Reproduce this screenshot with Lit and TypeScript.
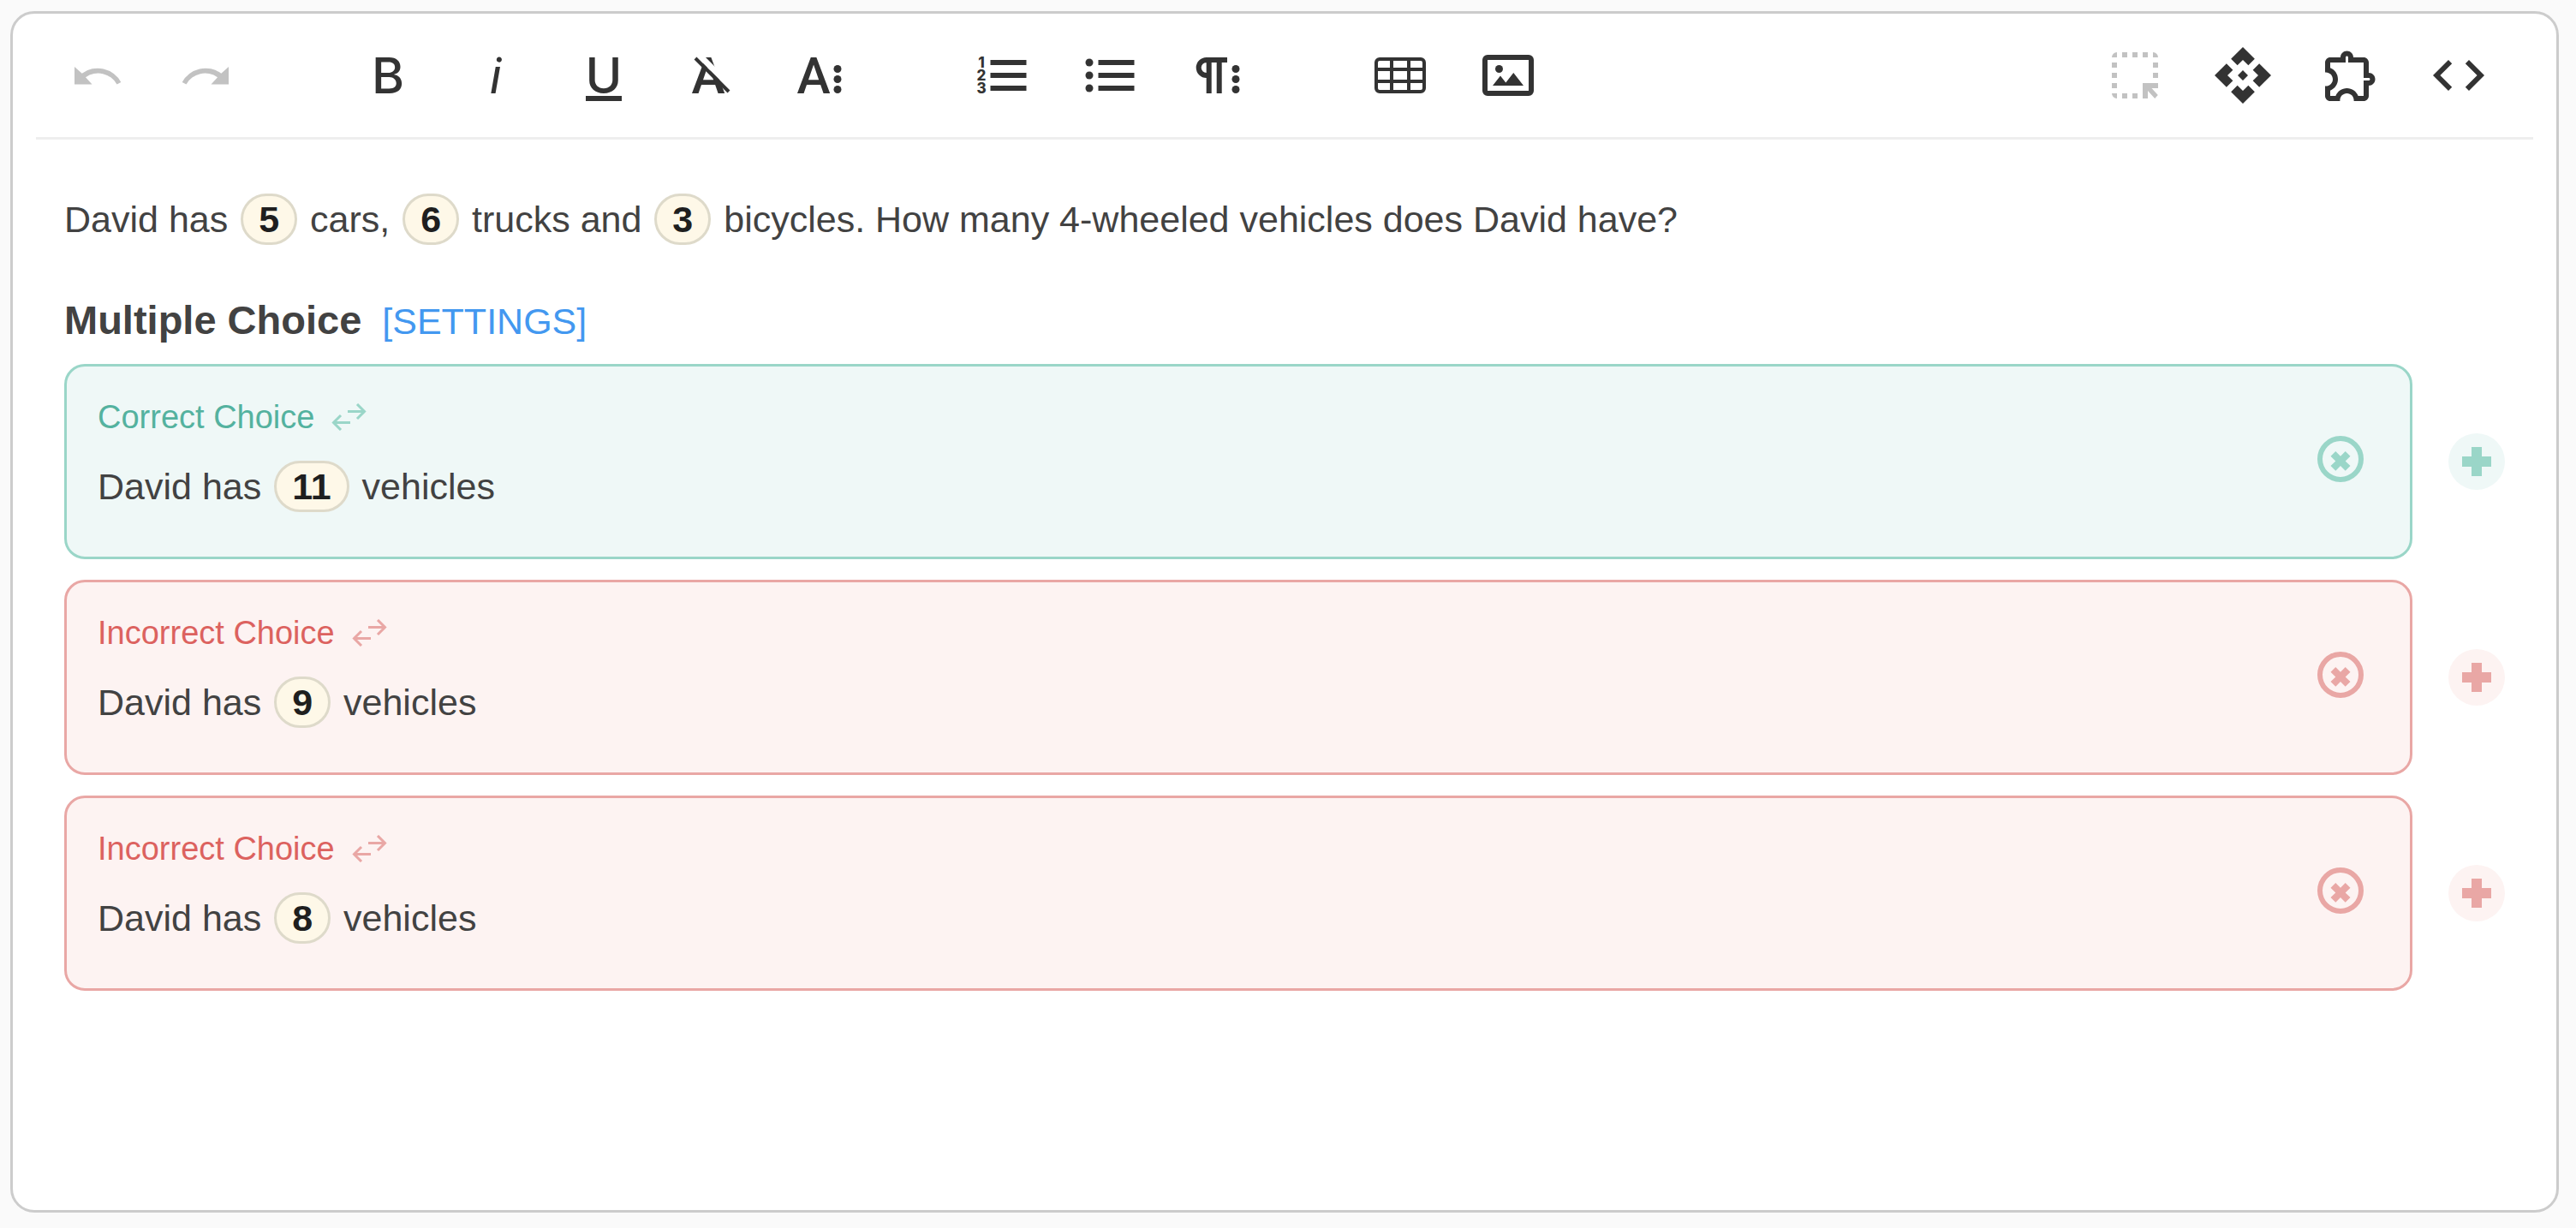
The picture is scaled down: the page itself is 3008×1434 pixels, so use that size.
import { LitElement, html, svg, css, type SVGTemplateResult } from "lit";
import { customElement, property } from "lit/decorators.js";
import { classMap } from "lit/directives/class-map.js";

// Toolbar icons are drawn on a 72 x 72 grid; those from a 24-unit set are scaled by 3.
const icons: Record<string, SVGTemplateResult> = {
  undo: svg`<path d="M9 26l8.7 7.7A31 31 0 0 1 63.3 44l-4.8 2.4A25 25 0 0 0 22 38.3l7.5 8.2H9z"/>`,
  redo: svg`<path transform="translate(72 0) scale(-1 1)" d="M9 26l8.7 7.7A31 31 0 0 1 63.3 44l-4.8 2.4A25 25 0 0 0 22 38.3l7.5 8.2H9z"/>`,
  bold: svg`<text class="glyph wide" x="36" y="57">B</text>`,
  italic: svg`<text class="glyph slanted" x="36" y="57">i</text>`,
  underline: svg`<text class="glyph wide" x="36" y="57">U</text><path d="M15 60h42v6H15z"/>`,
  clear: svg`<text class="glyph" x="32" y="57">A</text>
    <path class="gap" d="M21 12 L61 52"/>
    <path class="slash" d="M17 16 L56 55"/>`,
  moreText: svg`<text class="glyph" x="29" y="57">A</text>
    <circle cx="57" cy="28.5" r="4.5"/><circle cx="57" cy="40.5" r="4.5"/><circle cx="57" cy="52.5" r="4.5"/>`,
  ordered: svg`<text class="digit" x="12" y="27">1</text><text class="digit" x="12" y="42">2</text><text class="digit" x="12" y="57">3</text>
    <path d="M22.5 18h42v6h-42zM22.5 33h42v6h-42zM22.5 48h42v6h-42z"/>`,
  bullets: svg`<circle cx="12" cy="21" r="4.5"/><circle cx="12" cy="36" r="4.5"/><circle cx="12" cy="51" r="4.5"/>
    <path d="M22.5 18h42v6h-42zM22.5 33h42v6h-42zM22.5 48h42v6h-42z"/>`,
  paragraph: svg`<path class="line6" d="M47 18H22.7a9 9 0 0 0 0 18h3M25.7 18v39M37.7 18v39"/>
    <circle cx="57" cy="28.5" r="4.5"/><circle cx="57" cy="40.5" r="4.5"/><circle cx="57" cy="52.5" r="4.5"/>`,
  table: svg`<rect class="line4" x="8" y="17" width="56" height="38" rx="4"/>
    <path class="line4" d="M26 17v38M46 17v38M8 29h56M8 43h56"/>`,
  image: svg`<path fill-rule="evenodd" d="M12 12h48a6 6 0 0 1 6 6v36a6 6 0 0 1-6 6H12a6 6 0 0 1-6-6V18a6 6 0 0 1 6-6zM12 18v36h48V18z"/>
    <circle cx="25.5" cy="28.5" r="4.5"/><path d="M18 48l9-11.5 6.3 8L42.3 33 54 48z"/>`,
  select: svg`<path d="M9 15a6 6 0 0 1 6-6v6zM21 9h6v6h-6zM33 9h6v6h-6zM45 9h6v6h-6zM57 9a6 6 0 0 1 6 6h-6zM9 21h6v6H9zM9 33h6v6H9zM9 45h6v6H9zM9 57h6v6a6 6 0 0 1-6-6zM21 57h6v6h-6zM33 57h6v6h-6zM57 21h6v6h-6zM57 33h6v6h-6zM45 45h18v6h-7.5l7.3 8-3.6 4L51 54v9h-6z"/>`,
  api: svg`<path transform="scale(3)" d="M14 12l-2 2-2-2 2-2 2 2zm-2-6l2.12 2.12 2.5-2.5L12 1 7.38 5.62l2.5 2.5L12 6zm-6 6l2.12-2.12-2.5-2.5L1 12l4.62 4.62 2.5-2.5L6 12zm12 0l-2.12 2.12 2.5 2.5L23 12l-4.62-4.62-2.5 2.5L18 12zm-6 6l-2.12-2.12-2.5 2.5L12 23l4.62-4.62-2.5-2.5L12 18z"/>`,
  plugin: svg`<path transform="scale(3)" d="M10.5 4.5c.28 0 .5.22.5.5v2h6v6h2c.28 0 .5.22.5.5s-.22.5-.5.5h-2v6h-2.12c-.68-1.75-2.39-3-4.38-3s-3.7 1.25-4.38 3H4v-2.12c1.75-.68 3-2.39 3-4.38 0-1.99-1.24-3.7-2.99-4.38L4 7h6V5c0-.28.22-.5.5-.5m0-2C9.12 2.5 8 3.62 8 5H4c-1.1 0-1.99.9-1.99 2v3.8h.29c1.49 0 2.7 1.21 2.7 2.7s-1.21 2.7-2.7 2.7H2V20c0 1.1.9 2 2 2h3.8v-.3c0-1.49 1.21-2.7 2.7-2.7s2.7 1.21 2.7 2.7v.3H17c1.1 0 2-.9 2-2v-4c1.38 0 2.5-1.12 2.5-2.5S20.38 11 19 11V7c0-1.1-.9-2-2-2h-4c0-1.38-1.12-2.5-2.5-2.5z"/>`,
  code: svg`<path transform="scale(3)" d="M9.4 16.6L4.8 12l4.6-4.6L8 6l-6 6 6 6 1.4-1.4zm5.2 0l4.6-4.6-4.6-4.6L16 6l6 6-6 6-1.4-1.4z"/>`,
};

interface Tool {
  icon: string;
  label: string;
  disabled?: boolean;
}

const leftGroups: Tool[][] = [
  [
    { icon: "undo", label: "Undo", disabled: true },
    { icon: "redo", label: "Redo", disabled: true },
  ],
  [
    { icon: "bold", label: "Bold" },
    { icon: "italic", label: "Italic" },
    { icon: "underline", label: "Underline" },
    { icon: "clear", label: "Clear formatting" },
    { icon: "moreText", label: "More text" },
  ],
  [
    { icon: "ordered", label: "Ordered list" },
    { icon: "bullets", label: "Unordered list" },
    { icon: "paragraph", label: "More paragraph" },
  ],
  [
    { icon: "table", label: "Insert table" },
    { icon: "image", label: "Insert image" },
  ],
];

const rightGroup: Tool[] = [
  { icon: "select", label: "Select region", disabled: true },
  { icon: "api", label: "Components" },
  { icon: "plugin", label: "Plugins" },
  { icon: "code", label: "Code view" },
];

const buttonReset = css`
  button {
    margin: 0;
    padding: 0;
    border: 0;
    background: none;
    color: inherit;
    font: inherit;
    cursor: pointer;
  }
  svg {
    display: block;
  }
`;

const pillStyles = css`
  .pill {
    display: inline-block;
    box-sizing: border-box;
    height: 60px;
    margin: 0 3px;
    padding: 0 18px;
    border: 3px solid #dedaca;
    border-radius: 30px;
    background: #fef8e8;
    color: #1f1f1f;
    font-weight: 700;
    line-height: 54px;
  }
`;

@customElement("editor-toolbar")
export class EditorToolbar extends LitElement {
  static styles = [
    buttonReset,
    css`
      :host {
        display: block;
      }
      .bar {
        display: flex;
        justify-content: space-between;
        padding: 0 24px 0 9px;
        border-bottom: 3px solid #eee;
        color: #333;
      }
      .groups {
        display: flex;
        gap: 87px;
      }
      .group {
        display: flex;
      }
      .tool {
        display: flex;
        align-items: center;
        justify-content: center;
        width: 126px;
        height: 144px;
      }
      .tool:disabled {
        color: #c2c2c2;
        cursor: default;
      }
      .icon {
        width: 72px;
        height: 72px;
        fill: currentColor;
      }
      .glyph {
        font-family: Roboto, sans-serif;
        font-size: 59px;
        font-weight: 500;
        text-anchor: middle;
      }
      .wide {
        font-family: Inter, Roboto, sans-serif;
        font-size: 58px;
      }
      .slanted {
        font-style: italic;
        font-weight: 400;
      }
      .digit {
        font-family: Inter, sans-serif;
        font-size: 17px;
        font-weight: 800;
        text-anchor: middle;
      }
      .line6,
      .line4,
      .slash,
      .gap {
        fill: none;
        stroke: currentColor;
      }
      .line6 {
        stroke-width: 6;
      }
      .line4,
      .slash {
        stroke-width: 4;
      }
      .gap {
        stroke: #fff;
        stroke-width: 7;
      }
    `,
  ];

  private renderGroup(tools: Tool[]) {
    return html`<div class="group" role="group">
      ${tools.map(
        (t) => html`<button class="tool" type="button" aria-label=${t.label} ?disabled=${t.disabled}>
          <svg class="icon" viewBox="0 0 72 72" aria-hidden="true">${icons[t.icon]}</svg>
        </button>`,
      )}
    </div>`;
  }

  render() {
    return html`<div class="bar" role="toolbar" aria-label="Formatting">
      <div class="groups">${leftGroups.map((g) => this.renderGroup(g))}</div>
      ${this.renderGroup(rightGroup)}
    </div>`;
  }
}

@customElement("choice-row")
export class ChoiceRow extends LitElement {
  @property({ type: Boolean }) correct = false;
  @property() value = "";

  static styles = [
    buttonReset,
    pillStyles,
    css`
      :host {
        display: block;
      }
      .row {
        display: flex;
        align-items: center;
        gap: 42px;
        --line: #e9a7a5;
        --fill: #fdf3f2;
        --label: #dc625f;
      }
      .row.correct {
        --line: #9ad6c8;
        --fill: #eff8f7;
        --label: #54b29f;
      }
      .card {
        display: flex;
        flex: 1;
        align-items: center;
        justify-content: space-between;
        padding: 0 54px 0 36px;
        border: 3px solid var(--line);
        border-radius: 24px;
        background: var(--fill);
      }
      .body {
        padding: 36px 0 52px;
      }
      .head {
        display: flex;
        align-items: center;
        gap: 20px;
        margin-bottom: 28px;
        color: var(--label);
        font-size: 38px;
        line-height: 46px;
      }
      .text {
        margin: 0;
        line-height: 60px;
      }
      .swap,
      .remove {
        color: var(--line);
      }
      .swap svg {
        width: 42px;
        height: 32px;
        fill: none;
        stroke: currentColor;
        stroke-width: 3;
      }
      .remove {
        margin-bottom: 6px;
      }
      .remove svg {
        width: 54px;
        height: 54px;
        fill: currentColor;
      }
      .remove .ring {
        fill: none;
        stroke: currentColor;
        stroke-width: 6;
      }
      .add {
        display: flex;
        align-items: center;
        justify-content: center;
        width: 66px;
        height: 66px;
        border-radius: 50%;
        background: var(--fill);
        color: var(--line);
      }
      .add svg {
        width: 34px;
        height: 34px;
        fill: currentColor;
      }
    `,
  ];

  render() {
    return html`<div class=${classMap({ row: true, correct: this.correct })}>
      <div class="card">
        <div class="body">
          <div class="head">
            <span>${this.correct ? "Correct Choice" : "Incorrect Choice"}</span>
            <button class="swap" type="button" aria-label="Switch correctness">
              <svg viewBox="0 0 42 32" aria-hidden="true">
                <path d="M19 9.5h20M30 1l8.5 8.5L30 18M22 22.5H2M11 14l-8.5 8.5L11 31" />
              </svg>
            </button>
          </div>
          <p class="text">David has <span class="pill">${this.value}</span> vehicles</p>
        </div>
        <button class="remove" type="button" aria-label="Remove choice">
          <svg viewBox="0 0 54 54" aria-hidden="true">
            <circle class="ring" cx="27" cy="27" r="24" />
            <path d="M21.3 18l5.7 5.8 5.7-5.8 5.8 5.7-5.8 5.7 5.8 5.7-5.8 5.7-5.7-5.7-5.7 5.7-5.8-5.7 5.8-5.7-5.8-5.7z" />
          </svg>
        </button>
      </div>
      <button class="add" type="button" aria-label="Add choice">
        <svg viewBox="0 0 34 34" aria-hidden="true"><path d="M11 0h12v11h11v12H23v11H11V23H0V11h11z" /></svg>
      </button>
    </div>`;
  }
}

@customElement("app-root")
export class AppRoot extends LitElement {
  static styles = [
    pillStyles,
    css`
      :host {
        display: flex;
        flex-direction: column;
        box-sizing: border-box;
        min-height: 100vh;
        padding: 13px 20px 18px 12px;
        background: #fafafa;
        color: #424242;
        font-family: "Liberation Sans", Arial, sans-serif;
        font-size: 43px;
        line-height: 60px;
      }
      .panel {
        flex: 1;
        border: 3px solid #ccc;
        border-radius: 28px;
        background: #fff;
      }
      .toolbar {
        margin: 0 27px;
      }
      .content {
        padding: 63px 60px;
      }
      .question {
        margin: 0 0 58px;
      }
      .heading {
        display: flex;
        align-items: baseline;
        gap: 24px;
        margin-bottom: 20px;
      }
      .title {
        margin: 0;
        font-size: 47px;
        font-weight: 700;
      }
      .settings {
        color: #4398f0;
        text-decoration: none;
      }
      .choices {
        display: flex;
        flex-direction: column;
        gap: 24px;
      }
    `,
  ];

  render() {
    return html`<main class="panel">
      <editor-toolbar class="toolbar"></editor-toolbar>
      <div class="content">
        <p class="question">
          David has <span class="pill">5</span> cars, <span class="pill">6</span> trucks and
          <span class="pill">3</span> bicycles. How many 4-wheeled vehicles does David have?
        </p>
        <div class="heading">
          <h2 class="title">Multiple Choice</h2>
          <a class="settings" href="#settings">[SETTINGS]</a>
        </div>
        <div class="choices">
          <choice-row correct value="11"></choice-row>
          <choice-row value="9"></choice-row>
          <choice-row value="8"></choice-row>
        </div>
      </div>
    </main>`;
  }
}
